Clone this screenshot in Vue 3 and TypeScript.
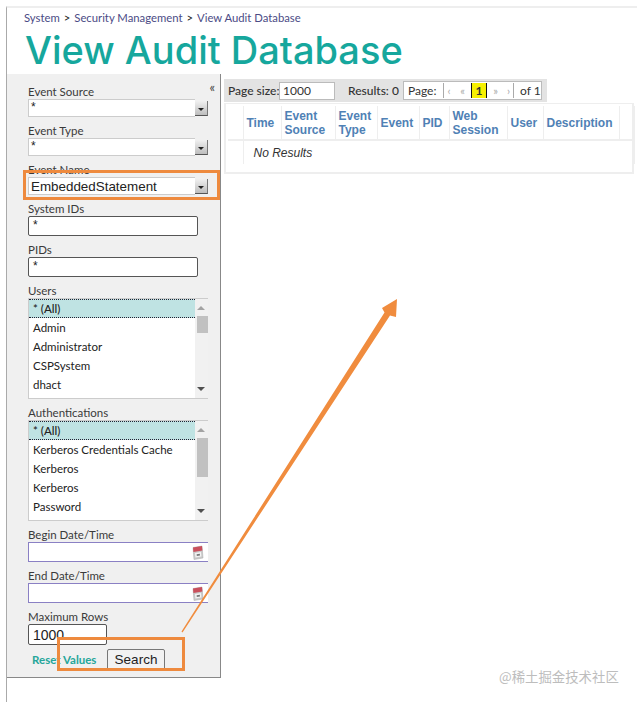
<script setup lang="ts">
interface ListBox {
  label: string;
  items: string[];
  thumbTop: number;
  thumbHeight: number;
}

const selects = [
  { label: "Event Source", value: "*", big: false },
  { label: "Event Type", value: "*", big: false },
  { label: "Event Name", value: "EmbeddedStatement", big: true },
];

const texts = [
  { label: "System IDs", value: "*" },
  { label: "PIDs", value: "*" },
];

const lists: ListBox[] = [
  {
    label: "Users",
    items: ["* (All)", "Admin", "Administrator", "CSPSystem", "dhact"],
    thumbTop: 17,
    thumbHeight: 17,
  },
  {
    label: "Authentications",
    items: ["* (All)", "Kerberos Credentials Cache", "Kerberos", "Kerberos", "Password"],
    thumbTop: 17,
    thumbHeight: 39,
  },
];

const dates = ["Begin Date/Time", "End Date/Time"];

const columns = [
  { title: "", width: 15 },
  { title: "Time", width: 38 },
  { title: "Event Source", width: 54 },
  { title: "Event Type", width: 42 },
  { title: "Event", width: 42 },
  { title: "PID", width: 30 },
  { title: "Web Session", width: 58 },
  { title: "User", width: 36 },
  { title: "Description", width: 76 },
  { title: "", width: 15 },
];
</script>

<template>
  <div class="page">
    <header class="head">
      <div class="crumbs">
        <span>System</span><b>&gt;</b><span>Security Management</span><b>&gt;</b><span>View Audit Database</span>
      </div>
      <h1 class="title">View Audit Database</h1>
    </header>

    <div class="main">
      <aside class="side">
        <span class="collapse">«</span>

        <div v-for="s in selects" :key="s.label" class="field">
          <label>{{ s.label }}</label>
          <div class="combo">
            <div class="combo-input" :class="{ big: s.big }">{{ s.value }}</div>
            <div class="combo-btn"><i></i></div>
          </div>
        </div>

        <div v-for="t in texts" :key="t.label" class="field">
          <label>{{ t.label }}</label>
          <div class="text-input">{{ t.value }}</div>
        </div>

        <div v-for="l in lists" :key="l.label" class="field">
          <label>{{ l.label }}</label>
          <div class="listbox">
            <div class="rows">
              <div v-for="(item, i) in l.items" :key="i" class="row" :class="{ on: i === 0 }">{{ item }}</div>
            </div>
            <div class="scroll">
              <i class="up"></i>
              <span class="thumb" :style="{ top: l.thumbTop + 'px', height: l.thumbHeight + 'px' }"></span>
              <i class="down"></i>
            </div>
          </div>
        </div>

        <div v-for="d in dates" :key="d" class="field">
          <label>{{ d }}</label>
          <div class="date-input">
            <svg width="12" height="15" viewBox="0 0 12 15">
              <path d="M1 2.5 10 1 11 13 2 14.5Z" fill="#c9c9c9" stroke="#a8a8a8" stroke-width="0.5" />
              <path d="M1 2.5 10 1 10.4 5.5 1.4 7Z" fill="#c9505c" />
              <path d="M3 8 9 7 9.4 11.6 3.4 12.6Z" fill="#f2f2f2" />
              <path d="M4.6 9.2 7.8 8.7 8 10.4 4.8 10.9Z" fill="#777" />
            </svg>
          </div>
        </div>

        <div class="field last">
          <label>Maximum Rows</label>
          <div class="text-input rows-input">1000</div>
        </div>

        <div class="actions">
          <a class="reset">Reset Values</a>
          <button class="search">Search</button>
        </div>
      </aside>

      <section class="content">
        <div class="toolbar">
          <span class="tool-label">Page size:</span>
          <div class="size-input">1000</div>
          <span class="results">Results: 0</span>
          <div class="pager">
            <span class="pg-text">Page:</span>
            <span class="pg-nav first">‹</span>
            <span class="pg-nav">«</span>
            <span class="pg-now">1</span>
            <span class="pg-nav">»</span>
            <span class="pg-nav last">›</span>
            <span class="pg-text of">of 1</span>
          </div>
        </div>

        <div class="grid-wrap">
          <table class="grid">
            <colgroup>
              <col v-for="(c, i) in columns" :key="i" :style="{ width: c.width + 'px' }" />
            </colgroup>
            <thead>
              <tr>
                <th v-for="(c, i) in columns" :key="i">{{ c.title }}</th>
              </tr>
            </thead>
            <tbody>
              <tr>
                <td></td>
                <td colspan="9" class="none">No Results</td>
              </tr>
            </tbody>
          </table>
        </div>
      </section>
    </div>

    <div class="mark mark-name"></div>
    <div class="mark mark-search"></div>
    <svg class="arrow" width="637" height="702" viewBox="0 0 637 702">
      <polygon points="181.5,631.5 384.5,312.4 382,308 397,299 396,317 390,315.6 182.5,632.5" fill="#f08c3e" />
    </svg>
    <div class="watermark">@稀土掘金技术社区</div>
  </div>
</template>

<style>
body {
  margin: 0;
  background: #fff;
}
</style>

<style scoped>
.page {
  position: relative;
  width: 637px;
  height: 702px;
  overflow: hidden;
  background: #fff;
  font-family: Lato, "Open Sans", sans-serif;
  color: #333;
}

.head {
  height: 66px;
  margin: 6px 0 0 6px;
  padding: 0 0 0 17px;
  border-top: 2px solid #eee;
  border-left: 1px solid #aaa;
}

.crumbs {
  padding-top: 3px;
  font-size: 11.3px;
  line-height: 14px;
  color: #4b4b85;
}

.crumbs b {
  margin: 0 4px;
  font-weight: 400;
  color: #222;
}

.title {
  margin: 4px 0 0 1px;
  font-family: Inter, sans-serif;
  font-size: 38px;
  line-height: 42px;
  font-weight: 500;
  white-space: nowrap;
  color: #16a79d;
}

.main {
  display: flex;
  height: 628px;
  margin-left: 6px;
  border-left: 1px solid #aaa;
}

.side {
  position: relative;
  box-sizing: border-box;
  width: 214px;
  height: 604px;
  padding: 11px 0 0 21px;
  background: #f0f0f0;
  border-right: 1px solid #888;
  border-bottom: 1px solid #888;
}

.collapse {
  position: absolute;
  top: 5px;
  right: 5px;
  font-size: 13px;
  line-height: 16px;
  color: #444;
}

.field {
  margin-bottom: 7px;
}

.field.last {
  margin-bottom: 4px;
}

.field label {
  display: block;
  height: 14px;
  font-size: 11.5px;
  line-height: 14px;
  white-space: nowrap;
  color: #3a3a3a;
}

.combo {
  display: flex;
  width: 180px;
  height: 18px;
}

.combo-input {
  box-sizing: border-box;
  width: 167px;
  height: 18px;
  padding-left: 2px;
  background: #fff;
  border: 1px solid #ccc;
  border-right: 0;
  font-family: "Liberation Sans", Arial, sans-serif;
  font-size: 12px;
  line-height: 15px;
  color: #222;
}

.combo-input.big {
  font-size: 13.4px;
  line-height: 17px;
}

.combo-btn {
  position: relative;
  box-sizing: border-box;
  width: 13px;
  height: 15px;
  margin-top: 2px;
  background: linear-gradient(#f0f0f0, #bdbdbd);
  border-right: 1px solid #777;
  border-bottom: 1px solid #555;
}

.combo-btn i {
  position: absolute;
  top: 7px;
  left: 3px;
  border-style: solid;
  border-width: 3px 3px 0;
  border-color: #222 transparent transparent;
}

.text-input {
  box-sizing: border-box;
  width: 170px;
  height: 20px;
  padding-left: 4px;
  background: #fff;
  border: 1px solid #555;
  border-radius: 2px;
  font-family: "Liberation Sans", Arial, sans-serif;
  font-size: 12px;
  line-height: 17px;
  color: #222;
}

.rows-input {
  width: 79px;
  height: 21px;
  font-size: 14px;
  line-height: 20px;
}

.listbox {
  display: flex;
  box-sizing: border-box;
  width: 180px;
  height: 101px;
  background: #fff;
  border-top: 1px solid #ccc;
  border-bottom: 1px solid #ccc;
  border-left: 1px solid #ccc;
}

.rows {
  width: 166px;
}

.row {
  box-sizing: border-box;
  height: 19px;
  padding: 1px 0 0 4px;
  font-size: 11.5px;
  line-height: 18px;
  white-space: nowrap;
  color: #222;
}

.row.on {
  padding-top: 0;
  background: #bfe3e3;
  border-top: 1px dotted #223;
  border-bottom: 1px dotted #223;
  font-weight: 500;
}

.scroll {
  position: relative;
  flex: 1;
  background: #f1f1f1;
}

.scroll i {
  position: absolute;
  left: 2px;
  border-style: solid;
}

.scroll .up {
  top: 7px;
  border-width: 0 4px 4px;
  border-color: transparent transparent #a3a3a3;
}

.scroll .down {
  bottom: 7px;
  border-width: 4px 4px 0;
  border-color: #505050 transparent transparent;
}

.thumb {
  position: absolute;
  left: 2px;
  width: 11px;
  background: #c1c1c1;
}

.date-input {
  display: flex;
  align-items: center;
  justify-content: flex-end;
  box-sizing: border-box;
  width: 180px;
  height: 20px;
  padding-right: 4px;
  background: #fff;
  border: 1px solid #8a80c4;
  border-right: 0;
}

.actions {
  display: flex;
  align-items: center;
  height: 21px;
  padding-left: 4px;
}

.reset {
  width: 63px;
  flex: none;
  font-size: 11.5px;
  font-weight: 700;
  white-space: nowrap;
  color: #26a69a;
}

.search {
  box-sizing: border-box;
  flex: none;
  width: 58px;
  height: 21px;
  margin-left: 12px;
  padding: 0;
  background: #f2f2f2;
  border: 1px solid #777;
  border-radius: 2px;
  font-family: "Liberation Sans", Arial, sans-serif;
  font-size: 13.5px;
  color: #222;
}

.content {
  padding: 5px 0 0 3px;
}

.toolbar {
  display: flex;
  align-items: center;
  box-sizing: border-box;
  width: 323px;
  height: 23px;
  padding-left: 4px;
  background: #e3e3e3;
  font-size: 12px;
  color: #333;
}

.tool-label {
  flex: none;
  width: 47px;
  font-weight: 500;
  white-space: nowrap;
}

.size-input {
  box-sizing: border-box;
  flex: none;
  width: 56px;
  height: 18px;
  margin-left: 4px;
  padding-left: 3px;
  background: #fff;
  border: 1px solid #bbb;
  font-size: 12px;
  line-height: 16px;
}

.results {
  flex: none;
  width: 55px;
  margin-left: 13px;
  font-weight: 500;
  white-space: nowrap;
}

.pager {
  display: flex;
  flex: none;
  align-items: center;
  box-sizing: border-box;
  width: 139px;
  height: 19px;
  padding-left: 4px;
  background: #fff;
  border: 1px solid #bbb;
}

.pg-text {
  flex: none;
  width: 30px;
  white-space: nowrap;
  color: #333;
}

.pg-text.of {
  width: auto;
  margin-left: 6px;
}

.pg-nav {
  flex: none;
  width: 17px;
  font-size: 11px;
  line-height: 15px;
  text-align: center;
  color: #aaa;
}

.pg-nav.first {
  width: 10px;
  margin-left: 5px;
  border-left: 1px solid #aaa;
}

.pg-nav.last {
  width: 9px;
  border-right: 1px solid #aaa;
}

.pg-now {
  box-sizing: border-box;
  flex: none;
  width: 16px;
  height: 15px;
  background: #f6f000;
  border-right: 1px solid #111;
  border-left: 1px solid #111;
  font-size: 12px;
  font-weight: 700;
  line-height: 15px;
  text-align: center;
  color: #333;
}

.grid-wrap {
  box-sizing: border-box;
  width: 410px;
  height: 71px;
  margin-top: 1px;
  padding: 2px 0 0 2px;
  border: 2px solid #eee;
  border-top-width: 1px;
}

.grid {
  width: 406px;
  table-layout: fixed;
  border-collapse: collapse;
  font-family: "Liberation Sans", Arial, sans-serif;
}

.grid th {
  height: 33px;
  padding: 0 3px;
  border-right: 1px solid #eee;
  border-bottom: 2px solid #eee;
  font-size: 12px;
  font-weight: 700;
  line-height: 14px;
  text-align: left;
  color: #4f81b5;
}

.grid td {
  height: 21px;
  border-right: 1px solid #eee;
}

.none {
  padding-left: 10px;
  font-size: 12px;
  font-style: italic;
  color: #333;
}

.mark {
  position: absolute;
  box-sizing: border-box;
  border: 3px solid #ee8a3e;
}

.mark-name {
  top: 170px;
  left: 23px;
  width: 197px;
  height: 30px;
}

.mark-search {
  top: 637px;
  left: 57px;
  width: 128px;
  height: 34px;
}

.arrow {
  position: absolute;
  top: 0;
  left: 0;
}

.watermark {
  position: absolute;
  top: 668px;
  left: 499px;
  font-family: "Noto Sans CJK SC", sans-serif;
  font-size: 13.4px;
  line-height: 17px;
  white-space: nowrap;
  color: #bdbdbd;
}
</style>
